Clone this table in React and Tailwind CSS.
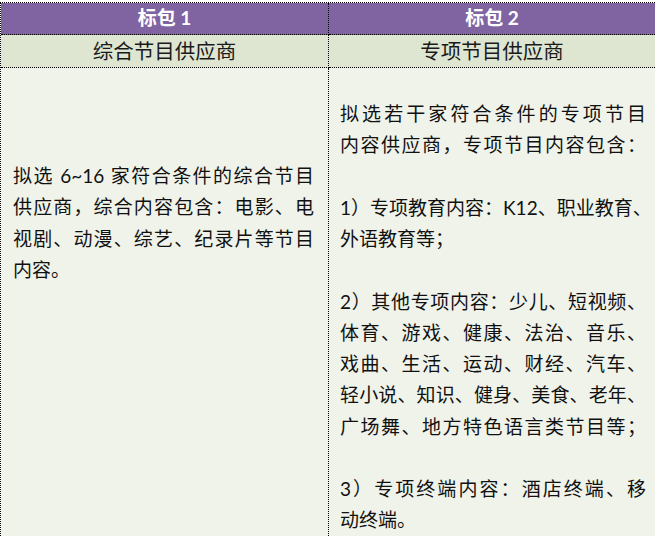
const font = {
  fontFamily: '"Lato", "Noto Sans CJK SC", sans-serif',
}

const leftLines = [
  { text: "拟选 6~16 家符合条件的综合节目", full: true },
  { text: "供应商，综合内容包含：电影、电", full: true },
  { text: "视剧、动漫、综艺、纪录片等节目", full: true },
  { text: "内容。" },
]

const rightLines = [
  { text: "拟选若干家符合条件的专项节目", full: true },
  { text: "内容供应商，专项节目内容包含：", full: true },
  { text: "" },
  { text: "1）专项教育内容：K12、职业教育、", full: true },
  { text: "外语教育等；" },
  { text: "" },
  { text: "2）其他专项内容：少儿、短视频、", full: true },
  { text: "体育、游戏、健康、法治、音乐、", full: true },
  { text: "戏曲、生活、运动、财经、汽车、", full: true },
  { text: "轻小说、知识、健身、美食、老年、", full: true },
  { text: "广场舞、地方特色语言类节目等；", full: true },
  { text: "" },
  { text: "3）专项终端内容：酒店终端、移", full: true },
  { text: "动终端。" },
]

function Lines({ lines }) {
  return (
    <div className="text-[19px] leading-[31.25px] text-[#111]">
      {lines.map((line, i) => (
        <div
          key={i}
          className={
            line.full
              ? "h-[31.25px] whitespace-nowrap text-justify [text-align-last:justify]"
              : "h-[31.25px] whitespace-nowrap"
          }
        >
          {line.text}
        </div>
      ))}
    </div>
  )
}

export default function App() {
  return (
    <div className="h-[536px] w-[655px] overflow-hidden bg-white pt-[2px]" style={font}>
      <div className="border-l border-t border-dotted border-black">
        {/* header row */}
        <div className="grid grid-cols-[328px_minmax(0,1fr)] bg-[#8064a2] text-[19px] font-bold text-white">
          <div className="flex h-[32px] items-center justify-center border-b border-r border-dotted border-black">
            标包 1
          </div>
          <div className="flex h-[32px] items-center justify-center border-b border-dotted border-black">
            标包 2
          </div>
        </div>

        {/* sub header row */}
        <div className="grid grid-cols-[328px_minmax(0,1fr)] bg-[#dee6d2] text-[20.5px] text-[#1a1a1a]">
          <div className="flex h-[33px] items-center justify-center border-b border-r border-dotted border-black">
            综合节目供应商
          </div>
          <div className="flex h-[33px] items-center justify-center border-b border-dotted border-black">
            专项节目供应商
          </div>
        </div>

        {/* body */}
        <div className="grid h-[480px] grid-cols-[328px_minmax(0,1fr)] bg-[#f0f3ea]">
          <div className="min-w-0 border-r border-dotted border-black pl-[12px] pr-[14px] pt-[92px]">
            <Lines lines={leftLines} />
          </div>
          <div className="min-w-0 pl-[11px] pr-[9px] pt-[30px]">
            <Lines lines={rightLines} />
          </div>
        </div>
      </div>
    </div>
  )
}
